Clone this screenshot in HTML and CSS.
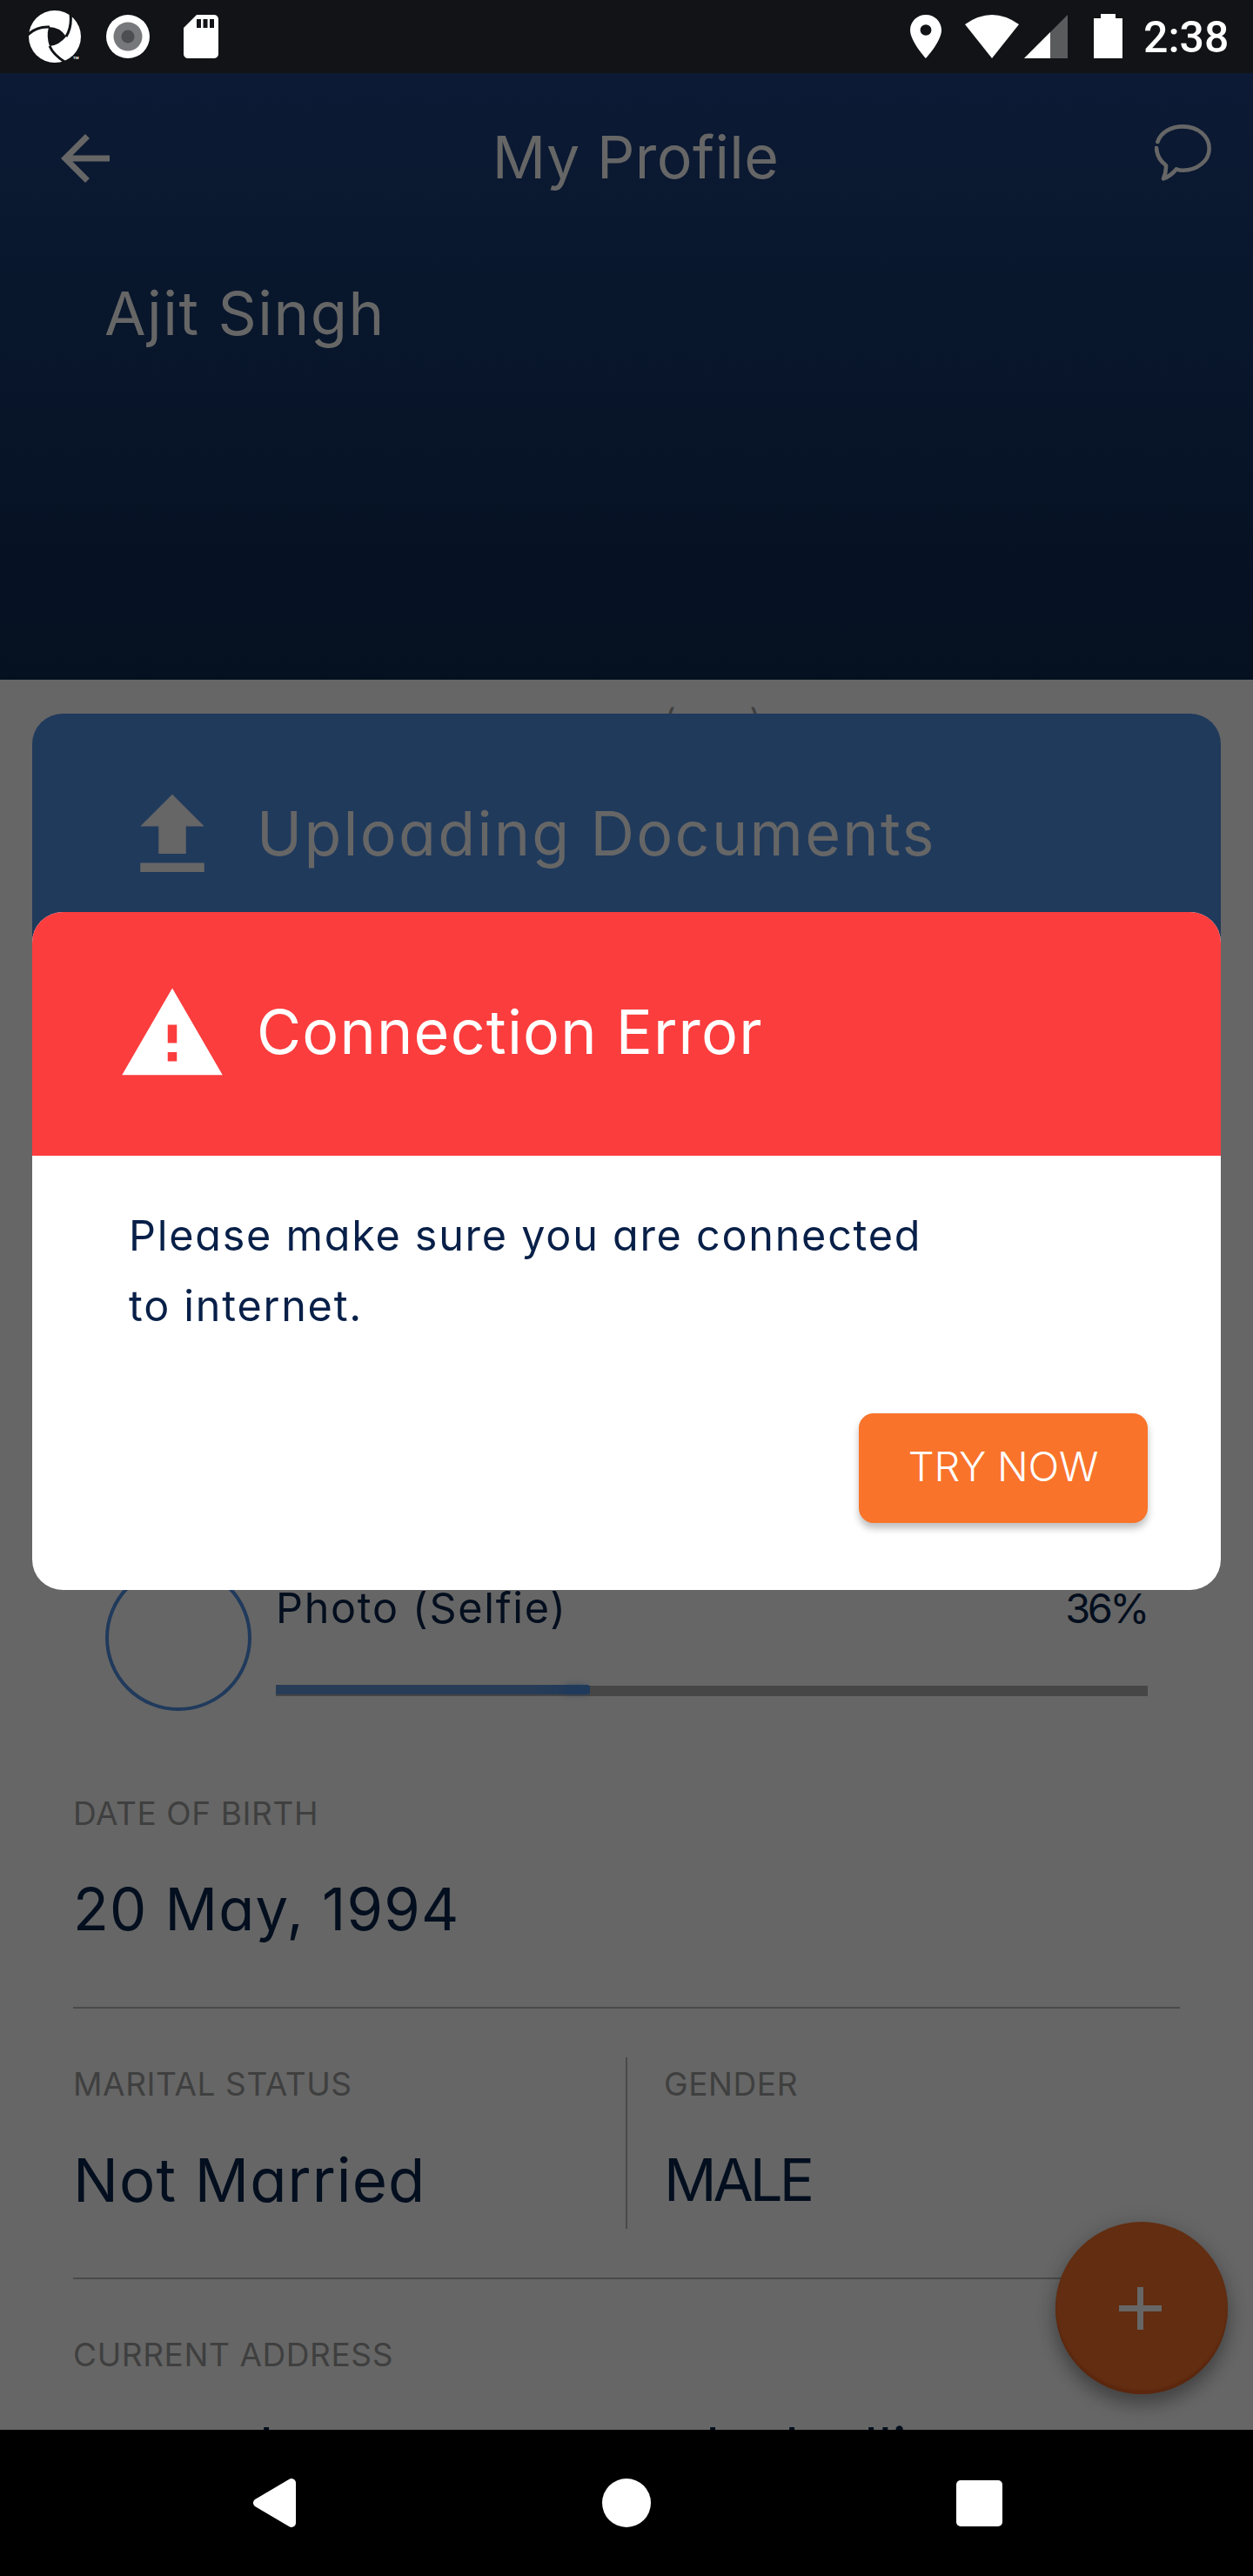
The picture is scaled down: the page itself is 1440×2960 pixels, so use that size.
FILE: index.html
```html
<!DOCTYPE html>
<html lang="en">
<head>
<meta charset="utf-8">
<title>My Profile</title>
<link rel="stylesheet" href="styles.css">
</head>
<body>
<div class="screen">
  <div class="status-bar">
    <div class="status-left">
      <svg width="60" height="60" viewBox="0 0 60 60">
        <circle cx="30" cy="30" r="30" fill="#fff"/>
        <path d="M23 19Q36 19 43 30Q35 40 24 41Q20 30 23 19z" fill="#111316"/>
        <path d="M47.500 0Q50.500 18 43 30M-1 28Q9 18 24 19M24 41Q29 52 43 60" fill="none" stroke="#111316" stroke-width="3"/>
        <path d="M40 60L49 54L60 54V60z" fill="#111316"/>
        <text x="51" y="56" font-size="4" font-weight="700" fill="#fff">TM</text>
      </svg>
      <svg width="60" height="60" viewBox="0 0 60 60">
        <circle cx="30" cy="30" r="25" fill="#fff"/>
        <circle cx="30" cy="30" r="16.500" fill="#77787b"/>
        <circle cx="30" cy="30" r="7.600" fill="#4d4e51"/>
      </svg>
      <svg width="60" height="60" viewBox="0 0 24 24" fill="#fff"><path d="M18 2h-8L4 8v12c0 1.100.9 2 2 2h12c1.100 0 2-.9 2-2V4c0-1.100-.9-2-2-2zm-6 6h-2V4h2v4zm3 0h-2V4h2v4zm3 0h-2V4h2v4z"/></svg>
    </div>
    <div class="status-right">
      <svg width="36" height="50" viewBox="5 2 14 20" preserveAspectRatio="none" fill="#fff"><path d="M12 2C8.130 2 5 5.130 5 9c0 5.250 7 13 7 13s7-7.750 7-13c0-3.870-3.130-7-7-7zm0 9.500a2.500 2.500 0 0 1 0-5 2.500 2.500 0 0 1 0 5z"/></svg>
      <svg class="wifi" width="62" height="50" viewBox="0 0 62 50"><path d="M0 11Q31-11 62 11L31 50z" fill="#fff"/></svg>
      <svg class="signal" width="50" height="50" viewBox="0 0 50 50"><path d="M50 0v50H0z" fill="#5a5b5d"/><path d="M30 20v30H0z" fill="#fff"/></svg>
      <svg class="battery" width="33" height="51" viewBox="0 0 33 51"><path d="M8 0h17v5h8v46H0V5h8z" fill="#fff"/></svg>
      <span class="clock">2:38</span>
    </div>
  </div>

  <header class="header">
    <div class="app-bar">
      <svg width="84" height="84" viewBox="0 0 24 24" fill="#666"><path d="M20 11H7.830l5.590-5.590L12 4l-8 8 8 8 1.410-1.410L7.830 13H20v-2z"/></svg>
      <h1 class="title">My Profile</h1>
      <svg class="chat" width="66" height="66" viewBox="0 0 66 66" fill="none" stroke="#666" stroke-width="4.600" stroke-linecap="round" stroke-linejoin="round"><path d="M3.400 20C7 9 19 2.400 32.300 2.400C50 2.400 62.700 13.500 62.700 27.700C62.700 42 49 52.700 32.300 52.700Q28.500 52.700 25 51.300Q18.500 59.500 10 62.300Q13.500 54 13 47C6 42 2.500 35 2 27"/></svg>
    </div>
    <div class="name">Ajit Singh</div>
  </header>

  <main class="profile">
    <div class="caption"><span>(</span><span>)</span></div>
    <section class="field">
      <div class="label">DATE OF BIRTH</div>
      <div class="value date">20 May, 1994</div>
    </section>
    <section class="field columns">
      <div>
        <div class="label">MARITAL STATUS</div>
        <div class="value status">Not Married</div>
      </div>
      <div class="separator"></div>
      <div class="second">
        <div class="label">GENDER</div>
        <div class="value gender">MALE</div>
      </div>
    </section>
    <section class="field address">
      <div class="label">CURRENT ADDRESS</div>
      <div class="value"><span>l</span><span>l</span><span>l</span><span>lli</span></div>
    </section>
    <div class="fab"><svg width="49" height="49" viewBox="0 0 49 49"><path d="M24.500 0v49M0 24.500h49" stroke="#666" stroke-width="7"/></svg></div>
  </main>

  <nav class="nav-bar">
    <svg width="57" height="58" viewBox="0 0 57 58"><path d="M6 29L45 6V52z" transform="translate(-1 0)" fill="#fff" stroke="#fff" stroke-width="10" stroke-linejoin="round"/></svg>
    <div class="home"></div>
    <div class="recent"></div>
  </nav>

  <div class="dialog upload">
    <div class="dialog-head">
      <svg width="126" height="126" viewBox="0 0 24 24" fill="#666"><path d="M9 16h6v-6h4l-7-7-7 7h4zm-4 2h14v2H5z"/></svg>
      <h2>Uploading Documents</h2>
    </div>
    <div class="document">
      <div class="thumb"></div>
      <div class="progress">
        <div class="progress-text"><span>Photo (Selfie)</span><span class="percent">36%</span></div>
        <div class="track"><div class="fill" style="width:36%"></div></div>
      </div>
    </div>
  </div>

  <div class="dialog error">
    <div class="dialog-head">
      <svg width="126" height="126" viewBox="0 0 24 24" fill="#fff"><path d="M1 21h22L12 2 1 21zm12-3h-2v-2h2v2zm0-4h-2v-4h2v4z"/></svg>
      <h2>Connection Error</h2>
    </div>
    <p>Please make sure you are connected<br>to internet.</p>
    <button>TRY NOW</button>
  </div>
</div>
</body>
</html>
```
FILE: styles.css
```css
* { box-sizing: border-box; }
body { margin: 0; font-family: Inter, sans-serif; font-feature-settings: "cv11" 1; background: #666; }
h1, h2, p { margin: 0; font-weight: 400; }
svg { display: block; flex: none; }

.screen { position: relative; width: 1440px; height: 2960px; overflow: hidden; display: flex; flex-direction: column; }

.status-bar { height: 84px; flex: none; background: #111316; display: flex; justify-content: space-between; padding: 12px 28px 0 33px; }
.status-left { display: flex; gap: 24px; }
.status-right { display: flex; align-items: flex-start; padding-top: 5px; }
.wifi { margin-left: 27px; }
.signal { margin-left: 6px; }
.battery { margin: -1px 24px 0 30px; }
.clock { width: 98px; font: 500 50px/52px Roboto, sans-serif; color: #fff; white-space: nowrap; }

.header { height: 697px; flex: none; background: linear-gradient(#0c1a35, #09172d 35%, #051020); color: #666; }
.app-bar { height: 196px; display: flex; align-items: center; justify-content: space-between; padding: 0 47px 0 56px; }
.title { font-size: 68px; line-height: 192px; letter-spacing: .4px; padding: 0 6px 4px 0; }
.chat { margin-bottom: 13px; }
.name { padding-left: 120px; font-size: 69px; line-height: 160px; letter-spacing: 1.5px; }

.profile { position: relative; height: 2011px; flex: none; padding: 17px 84px 0; overflow: hidden; background: #666; }
.caption { height: 1199px; padding-left: 679px; display: flex; gap: 85px; font-size: 37px; line-height: 60px; color: #3f3f3f; }
.field { height: 311px; padding-top: 57px; border-bottom: 2px solid #4a4a4a; }
.label { font-size: 37px; line-height: 60px; letter-spacing: .6px; color: #3f3f3f; }
.value { margin-top: 30px; font-size: 67px; line-height: 100px; color: #030e1e; }
.date { letter-spacing: 1.2px; }
.status { font-size: 69px; letter-spacing: 1.1px; }
.gender { letter-spacing: -4px; }
.columns { display: grid; grid-template-columns: 635px 2px 1fr; }
.separator { height: 197px; margin-top: -1px; background: #4a4a4a; }
.second { padding-left: 42px; }
.address { border: 0; }
.address .value { display: flex; margin-top: 28px; padding-left: 214px; }
.address .value span { width: 91px; }
.address .value span:first-child { width: 513px; }
.fab { position: absolute; left: 1213px; top: 1772px; width: 198px; height: 198px; border-radius: 50%; background: #622d10; box-shadow: 0 12px 20px rgba(0,0,0,.3), 0 2px 26px rgba(0,0,0,.12), inset 0 -4px 2px #5b270e; display: flex; align-items: center; justify-content: center; padding-right: 3px; }

.nav-bar { height: 168px; flex: none; background: #000; display: flex; align-items: center; padding: 0 288px 0 291px; justify-content: space-between; }
.home { width: 56px; height: 56px; margin-right: 7px; border-radius: 50%; background: #fff; }
.recent { width: 53px; height: 53px; border-radius: 5px; background: #fff; }

.dialog { position: absolute; left: 37px; width: 1366px; border-radius: 35px; overflow: hidden; }
.dialog-head { height: 280px; display: flex; align-items: center; gap: 34px; padding-left: 98px; }
.dialog h2 { font-size: 70px; line-height: 100px; padding-bottom: 4px; }
.upload { top: 820px; height: 1160px; background: #666; color: #666; }
.upload .dialog-head { background: #203a5c; }
.upload h2 { letter-spacing: 2.3px; }
.document { display: flex; padding: 698px 84px 0; gap: 28px; }
.thumb { width: 168px; height: 168px; flex: none; border: 4px solid #203a5c; border-radius: 50%; }
.progress { flex: 1; color: #030e1e; font-size: 48.5px; line-height: 60px; letter-spacing: 1.7px; padding-top: 20px; }
.progress-text { display: flex; justify-content: space-between; }
.percent { font-size: 47px; letter-spacing: -3.5px; margin-right: 1px; }
.track { height: 12px; margin-top: 59px; background: #464646; }
.fill { position: relative; top: -1px; height: 11px; border-radius: 0 3px 3px 0; background: linear-gradient(90deg, #273c57 82%, #203a5c); }
.fill::after { content: ""; position: absolute; right: 0; top: 1px; width: 24px; height: 9px; background: #203a5c; box-shadow: -4px 0 7px rgba(32,58,92,.7); clip-path: inset(-12px 0 -12px -40px); }

.error { top: 1048px; height: 779px; background: #fff; display: flex; flex-direction: column; }
.error .dialog-head { flex: none; background: #fb3d3e; color: #fff; }
.error h2 { letter-spacing: 1.2px; }
.error p { padding: 51px 0 0 111px; font-size: 48.5px; line-height: 81px; letter-spacing: 1.75px; color: #082048; }
.error button { align-self: flex-end; width: 332px; height: 126px; margin: 83px 84px 0 0; border: 0; border-radius: 17px; background: #f9732a; color: #fff; font: 300 47px/120px Inter, sans-serif; letter-spacing: -.2px; padding: 0 0 4px; box-shadow: 0 6px 9px rgba(0,0,0,.26); }
```
